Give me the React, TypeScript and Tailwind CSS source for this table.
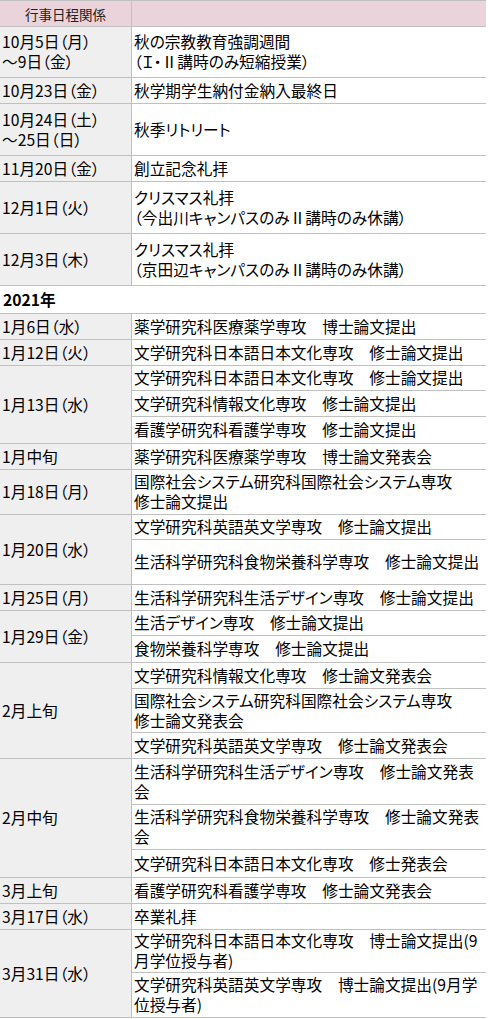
import React from "react";

type Entry = { lines: string[]; h: number };
type Row = { date: string[]; items: Entry[] };

const FALL: Row[] = [
  {
    date: ["10月5日（月）", "～9日（金）"],
    items: [{ lines: ["秋の宗教教育強調週間", "（Ｉ・Ⅱ講時のみ短縮授業）"], h: 50 }],
  },
  { date: ["10月23日（金）"], items: [{ lines: ["秋学期学生納付金納入最終日"], h: 25 }] },
  {
    date: ["10月24日（土）", "～25日（日）"],
    items: [{ lines: ["秋季リトリート"], h: 51 }],
  },
  { date: ["11月20日（金）"], items: [{ lines: ["創立記念礼拝"], h: 25 }] },
  {
    date: ["12月1日（火）"],
    items: [{ lines: ["クリスマス礼拝", "（今出川キャンパスのみⅡ講時のみ休講）"], h: 51 }],
  },
  {
    date: ["12月3日（木）"],
    items: [{ lines: ["クリスマス礼拝", "（京田辺キャンパスのみⅡ講時のみ休講）"], h: 51 }],
  },
];

const WINTER: Row[] = [
  { date: ["1月6日（水）"], items: [{ lines: ["薬学研究科医療薬学専攻　博士論文提出"], h: 25 }] },
  { date: ["1月12日（火）"], items: [{ lines: ["文学研究科日本語日本文化専攻　修士論文提出"], h: 25 }] },
  {
    date: ["1月13日（水）"],
    items: [
      { lines: ["文学研究科日本語日本文化専攻　修士論文提出"], h: 25 },
      { lines: ["文学研究科情報文化専攻　修士論文提出"], h: 25 },
      { lines: ["看護学研究科看護学専攻　修士論文提出"], h: 25 },
    ],
  },
  { date: ["1月中旬"], items: [{ lines: ["薬学研究科医療薬学専攻　博士論文発表会"], h: 25 }] },
  {
    date: ["1月18日（月）"],
    items: [{ lines: ["国際社会システム研究科国際社会システム専攻", "修士論文提出"], h: 44 }],
  },
  {
    date: ["1月20日（水）"],
    items: [
      { lines: ["文学研究科英語英文学専攻　修士論文提出"], h: 25 },
      { lines: ["生活科学研究科食物栄養科学専攻　修士論文提出"], h: 43 },
    ],
  },
  { date: ["1月25日（月）"], items: [{ lines: ["生活科学研究科生活デザイン専攻　修士論文提出"], h: 25 }] },
  {
    date: ["1月29日（金）"],
    items: [
      { lines: ["生活デザイン専攻　修士論文提出"], h: 25 },
      { lines: ["食物栄養科学専攻　修士論文提出"], h: 25 },
    ],
  },
  {
    date: ["2月上旬"],
    items: [
      { lines: ["文学研究科情報文化専攻　修士論文発表会"], h: 26 },
      { lines: ["国際社会システム研究科国際社会システム専攻", "修士論文発表会"], h: 43 },
      { lines: ["文学研究科英語英文学専攻　修士論文発表会"], h: 24 },
    ],
  },
  {
    date: ["2月中旬"],
    items: [
      { lines: ["生活科学研究科生活デザイン専攻　修士論文発表", "会"], h: 46 },
      { lines: ["生活科学研究科食物栄養科学専攻　修士論文発表", "会"], h: 44 },
      { lines: ["文学研究科日本語日本文化専攻　修士発表会"], h: 26 },
    ],
  },
  { date: ["3月上旬"], items: [{ lines: ["看護学研究科看護学専攻　修士論文発表会"], h: 25 }] },
  { date: ["3月17日（水）"], items: [{ lines: ["卒業礼拝"], h: 25 }] },
  {
    date: ["3月31日（水）"],
    items: [
      { lines: ["文学研究科日本語日本文化専攻　博士論文提出(9", "月学位授与者)"], h: 43 },
      { lines: ["文学研究科英語英文学専攻　博士論文提出(9月学", "位授与者)"], h: 43 },
    ],
  },
];

function ScheduleRow({ row }: { row: Row }) {
  return (
    <div className="flex border-t border-[#c0c0c0]">
      <div className="flex w-[132px] shrink-0 flex-col justify-center border-r border-[#c0c0c0] bg-[#efefef] pl-[2px]">
        {row.date.map((d) => (
          <span key={d} className="whitespace-nowrap">
            {d}
          </span>
        ))}
      </div>
      <div className="flex flex-1 flex-col divide-y divide-[#c0c0c0]">
        {row.items.map((item, i) => (
          <div
            key={i}
            className="flex flex-col justify-center pl-[2px]"
            style={{ height: item.h + (i > 0 ? 1 : 0) }}
          >
            {item.lines.map((l) => (
              <span key={l} className="whitespace-nowrap">
                {l}
              </span>
            ))}
          </div>
        ))}
      </div>
    </div>
  );
}

export default function App() {
  return (
    <div className="min-h-[1019px] bg-white font-['Noto_Sans_CJK_JP','Noto_Sans',sans-serif] text-[15.7px] leading-[20px] text-black [font-feature-settings:'palt']">
      <div className="w-[486px] border-b border-[#c0c0c0]">
        <div className="flex h-[26px] border-t border-[#c0c0c0] bg-[#ebd3db]">
          <div className="flex w-[132px] shrink-0 items-center justify-center border-r border-[#c0c0c0] text-[13.5px] text-[#222]">
            行事日程関係
          </div>
          <div className="flex-1" />
        </div>
        {FALL.map((row) => (
          <ScheduleRow key={row.date[0]} row={row} />
        ))}
      </div>

      <div className="flex h-[27px] items-center pl-[3px] font-bold">2021年</div>

      <div className="w-[486px] border-b border-[#c0c0c0]">
        {WINTER.map((row) => (
          <ScheduleRow key={row.date[0]} row={row} />
        ))}
      </div>
    </div>
  );
}
